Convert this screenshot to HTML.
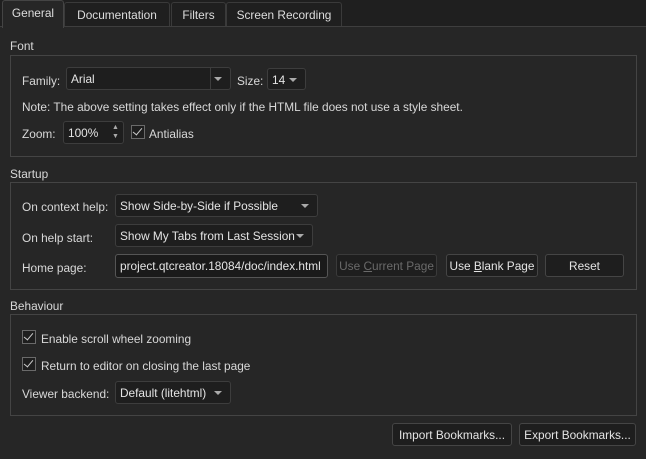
<!DOCTYPE html>
<html><head><style>
body{margin:0;width:646px;height:459px;background:#262626;font-family:"Liberation Sans",sans-serif;font-size:11.85px;color:#d8d8d8;position:relative;overflow:hidden}
.a{position:absolute;white-space:nowrap}
.tabbar{position:absolute;left:0;top:0;width:646px;height:26px;background:#1f1f1f;border-bottom:1px solid #3e3e3e}
.tab{position:absolute;top:2px;height:23px;border:1px solid #3a3a3a;border-bottom:none;border-radius:3px 3px 0 0;background:#1f1f1f;line-height:24px;text-align:center;color:#ddd}
.tab.sel{top:0;height:27px;background:#262626;border-color:#444;z-index:2}
.box{position:absolute;left:10px;width:625px;border:1px solid #444;}
.cb{position:absolute;border:1px solid #3d3d3d;border-radius:3px;background:#1e1e1e;line-height:22px;padding-left:4px;box-sizing:border-box;color:#e4e4e4;white-space:nowrap;overflow:hidden}
.cb.dd:after{content:"";position:absolute;right:8px;top:9px;border-left:4px solid transparent;border-right:4px solid transparent;border-top:4px solid #aaa}
.btn{position:absolute;border:1px solid #454545;border-radius:3px;background:#1e1e1e;text-align:center;line-height:22px;box-sizing:border-box;color:#e4e4e4}
.chk{position:absolute;width:12px;height:12px;border:1px solid #6a6a6a;background:#1e1e1e}
.chk:after{content:"";position:absolute;left:3px;top:0px;width:4px;height:8px;border-right:1.5px solid #ccc;border-bottom:1.5px solid #ccc;transform:rotate(40deg)}
u{text-decoration:underline}
</style></head><body>
<div class="tabbar"></div>
<div class="tab sel" style="left:2px;width:60px">General</div>
<div class="tab" style="left:64px;width:104px">Documentation</div>
<div class="tab" style="left:171px;width:53px">Filters</div>
<div class="tab" style="left:226px;width:114px">Screen Recording</div>

<div class="a" style="left:10px;top:39px">Font</div>
<div class="box" style="top:55px;height:100px"></div>
<div class="a" style="left:22px;top:74px">Family:</div>
<div class="cb dd" style="left:66px;top:67px;width:165px;height:23px">Arial</div>
<div style="position:absolute;left:210px;top:68px;width:1px;height:21px;background:#3d3d3d"></div>
<div class="a" style="left:237px;top:74px">Size:</div>
<div class="cb dd" style="left:267px;top:68px;width:39px;height:22px">14</div>
<div class="a" style="left:22px;top:100px">Note: The above setting takes effect only if the HTML file does not use a style sheet.</div>
<div class="a" style="left:22px;top:127px">Zoom:</div>
<div class="cb" style="left:63px;top:121px;width:61px;height:23px">100%</div>
<div class="a" style="left:112px;top:123px;font-size:7px;color:#aaa;line-height:9px">▲<br>▼</div>
<div class="chk" style="left:131px;top:125px"></div>
<div class="a" style="left:149px;top:127px">Antialias</div>

<div class="a" style="left:10px;top:167px">Startup</div>
<div class="box" style="top:182px;height:106px"></div>
<div class="a" style="left:22px;top:200px">On context help:</div>
<div class="cb dd" style="left:115px;top:194px;width:203px;height:23px">Show Side-by-Side if Possible</div>
<div class="a" style="left:22px;top:231px">On help start:</div>
<div class="cb dd" style="left:115px;top:224px;width:198px;height:23px">Show My Tabs from Last Session</div>
<div class="a" style="left:22px;top:261px">Home page:</div>
<div class="cb" style="left:115px;top:254px;width:213px;height:24px;border-color:#555;background:#1a1a1a">project.qtcreator.18084/doc/index.html</div>
<div class="btn" style="left:336px;top:254px;width:101px;height:23px;color:#6a6a6a;border-color:#3a3a3a">Use <u>C</u>urrent Page</div>
<div class="btn" style="left:446px;top:254px;width:92px;height:23px">Use <u>B</u>lank Page</div>
<div class="btn" style="left:545px;top:254px;width:79px;height:23px">Reset</div>

<div class="a" style="left:10px;top:299px">Behaviour</div>
<div class="box" style="top:314px;height:100px"></div>
<div class="chk" style="left:22px;top:330px"></div>
<div class="a" style="left:41px;top:332px">Enable scroll wheel zooming</div>
<div class="chk" style="left:22px;top:357px"></div>
<div class="a" style="left:41px;top:359px">Return to editor on closing the last page</div>
<div class="a" style="left:22px;top:387px">Viewer backend:</div>
<div class="cb dd" style="left:115px;top:381px;width:116px;height:23px">Default (litehtml)</div>

<div class="btn" style="left:392px;top:423px;width:120px;height:23px">Import Bookmarks...</div>
<div class="btn" style="left:519px;top:423px;width:117px;height:23px">Export Bookmarks...</div>
</body></html>
